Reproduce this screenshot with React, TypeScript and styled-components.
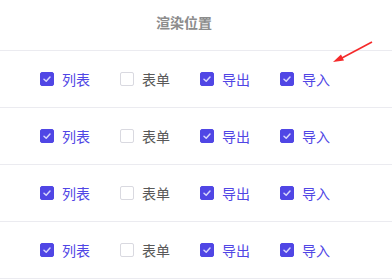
import styled, { createGlobalStyle } from 'styled-components';

const GlobalStyle = createGlobalStyle`
  body {
    margin: 0;
    background: #fff;
    font-family: "Noto Sans CJK SC", "Noto Sans", sans-serif;
  }
`;

const Table = styled.div`
  position: relative;
  width: 392px;
  height: 280px;
  overflow: hidden;
  background: #fff;
`;

const HeaderCell = styled.div`
  display: flex;
  align-items: center;
  justify-content: center;
  height: 44px;
  padding: 0 24px 6px 0;
  border-bottom: 1px solid #ebebf0;
  color: #8c8c8c;
  font-size: 14px;
  font-weight: 600;
`;

const Row = styled.div`
  display: flex;
  align-items: center;
  justify-content: center;
  height: 56px;
  padding-right: 22px;
  border-bottom: 1px solid #ebebf0;
`;

const Group = styled.div`
  display: flex;
  align-items: center;
  gap: 30px;
`;

const Item = styled.label`
  display: flex;
  align-items: center;
  gap: 8px;
  width: 50px;
`;

const Box = styled.span<{ checked?: boolean }>`
  display: flex;
  align-items: center;
  justify-content: center;
  box-sizing: border-box;
  width: 14px;
  height: 14px;
  border-radius: 2px;
  background: ${(p) => (p.checked ? '#5046e5' : '#fff')};
  border: 1px solid ${(p) => (p.checked ? '#5046e5' : '#d9d9e0')};
`;

const Label = styled.span<{ checked?: boolean }>`
  font-size: 14px;
  line-height: 20px;
  color: ${(p) => (p.checked ? '#5046e5' : '#595959')};
  white-space: nowrap;
`;

const Arrow = styled.svg`
  position: absolute;
  left: 0;
  top: 0;
  pointer-events: none;
`;

const options = [
  { title: '列表', checked: true },
  { title: '表单', checked: false },
  { title: '导出', checked: true },
  { title: '导入', checked: true },
];

function Check() {
  return (
    <svg width="10" height="10" viewBox="0 0 10 10">
      <path d="M2 5.2 L4.2 7.2 L8 3" fill="none" stroke="#d8d6fb" strokeWidth="1.5" strokeLinecap="round" strokeLinejoin="round" />
    </svg>
  );
}

export default function App(): JSX.Element {
  return (
    <Table>
      <GlobalStyle />
      <HeaderCell>渲染位置</HeaderCell>
      {[0, 1, 2, 3].map((r) => (
        <Row key={r}>
          <Group>
            {options.map((o) => (
              <Item key={o.title}>
                <Box checked={o.checked}>{o.checked && <Check />}</Box>
                <Label checked={o.checked}>{o.title}</Label>
              </Item>
            ))}
          </Group>
        </Row>
      ))}
      <Arrow width="392" height="280">
        <line x1="372" y1="42" x2="340" y2="59" stroke="#f52a2a" strokeWidth="1.6" />
        <polygon points="333,62 341,54.5 344,60.5" fill="#f52a2a" />
      </Arrow>
    </Table>
  );
}
